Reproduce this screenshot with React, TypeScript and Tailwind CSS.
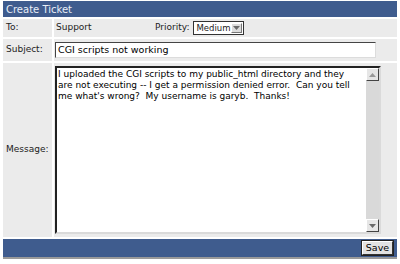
const FONT = "font-['DejaVu_Sans',Verdana,sans-serif]";

const MESSAGE_LINES = [
  "I uploaded the CGI scripts to my public_html directory and they",
  "are not executing -- I get a permission denied error.  Can you tell",
  "me what's wrong?  My username is garyb.  Thanks!",
];

function Arrow({ dir }: { dir: "up" | "down" }) {
  return (
    <svg width="7" height="4" viewBox="0 0 7 4" className="block">
      {dir === "up" ? (
        <polygon points="0,4 7,4 3.5,0" fill="#9a9a9a" />
      ) : (
        <polygon points="0,0 7,0 3.5,4" fill="#6a6a6a" />
      )}
    </svg>
  );
}

export default function App() {
  return (
    <div className={`w-[400px] h-[264px] bg-white pt-px px-[3px] text-[9px] text-[#222] ${FONT}`}>
      {/* ── Title bar ─────────────────────────────────────────────── */}
      <div className="h-4 bg-[#3f5c8e] px-[3px] flex items-center text-[#e9eef7] text-[10px]">
        Create Ticket
      </div>

      {/* ── Form rows ─────────────────────────────────────────────── */}
      <div className="mt-[2px] grid grid-cols-[49px_1fr] grid-rows-[18px_22px_174px] gap-[2px]">
        <div className="bg-[#ebebeb] px-[3px] flex items-center">To:</div>
        <div className="bg-[#ebebeb] flex items-center pl-[2px]">
          <span className="w-[99px]">Support</span>
          <span className="mr-[4px]">Priority:</span>
          <div className="h-[14px] w-[51px] bg-white border border-[#333] flex items-center">
            <span className="flex-1 pl-[2px] text-[8.5px]">Medium</span>
            <div className="h-[10px] w-[11px] mr-px bg-[#dcdcdc] border border-t-white border-l-white border-b-[#777] border-r-[#777] flex items-center justify-center">
              <Arrow dir="down" />
            </div>
          </div>
        </div>

        <div className="bg-[#ebebeb] px-[3px] flex items-center">Subject:</div>
        <div className="bg-[#ebebeb] flex items-center pl-px">
          <div className="h-4 w-[321px] bg-white border border-t-[#444] border-l-[#444] border-b-[#dcdcdc] border-r-[#dcdcdc] flex items-center px-[2px] text-[9.5px] text-black">
            CGI scripts not working
          </div>
        </div>

        <div className="bg-[#ebebeb] px-[3px] flex items-center">Message:</div>
        <div className="bg-[#ebebeb] pl-px pt-[3px]">
          <div className="h-[168px] w-[326px] bg-white border-2 border-t-[#222] border-l-[#222] border-b-[#dadada] border-r-[#dadada] flex">
            <div className="flex-1 px-px pt-px text-[9px] leading-[11px] text-black whitespace-pre">
              {MESSAGE_LINES.map((l) => (
                <div key={l}>{l}</div>
              ))}
            </div>
            <div className="w-[13px] flex flex-col bg-[#d9d9d9]">
              <div className="h-[13px] bg-[#e6e6e6] border border-t-white border-l-white border-b-[#444] border-r-[#444] flex items-center justify-center">
                <Arrow dir="up" />
              </div>
              <div className="flex-1" />
              <div className="h-[13px] bg-[#e6e6e6] border border-t-white border-l-white border-b-[#444] border-r-[#444] flex items-center justify-center">
                <Arrow dir="down" />
              </div>
            </div>
          </div>
        </div>
      </div>

      {/* ── Footer ────────────────────────────────────────────────── */}
      <div className="mt-[2px] h-5 bg-[#3f5c8e] flex items-center justify-end pr-[4px] border-b-2 border-[#9a9a9a]">
        <button className="h-[14px] w-[31px] bg-[#e2e2e2] border border-t-white border-l-white border-b-[#333] border-r-[#333] outline outline-1 outline-[#222] text-[9.5px] text-black leading-none">
          Save
        </button>
      </div>
    </div>
  );
}
